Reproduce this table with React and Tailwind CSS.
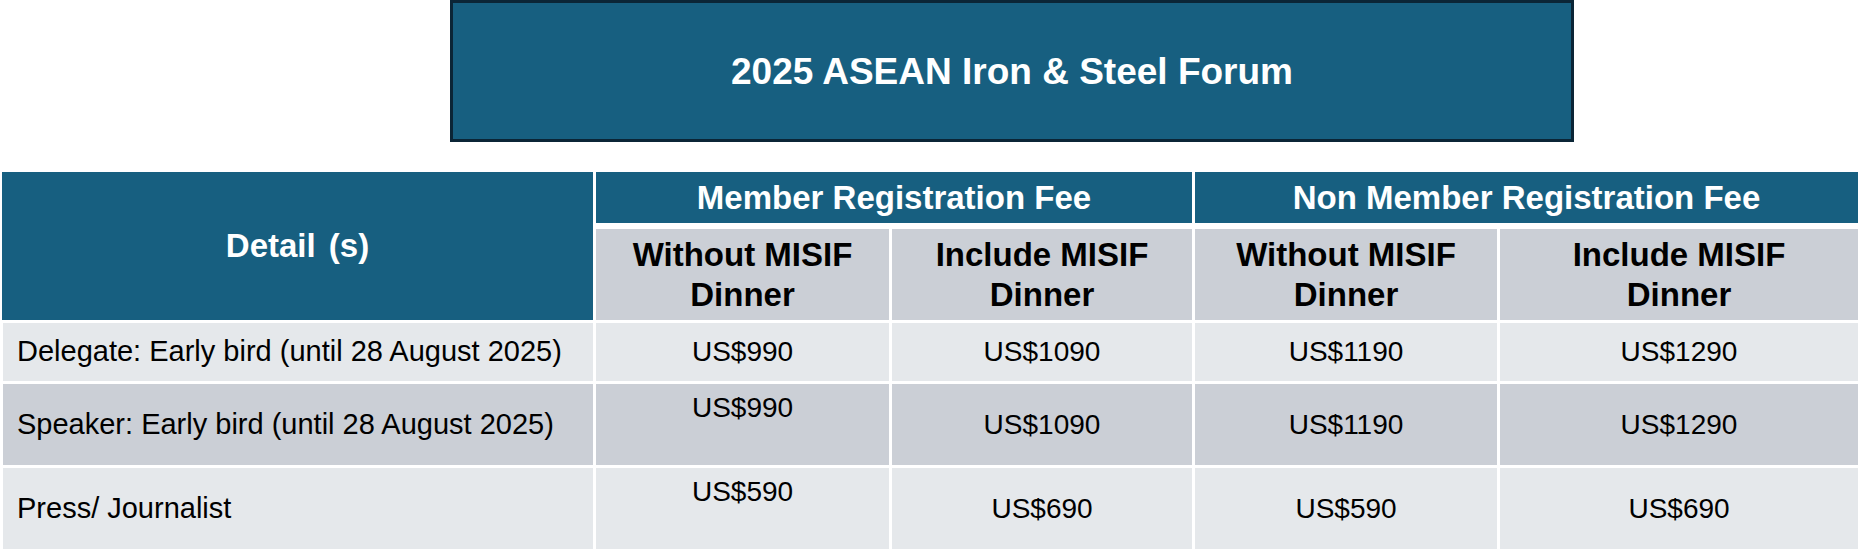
import React from 'react';

// Fee table rows: label, four prices, row shade, and whether the first price sits at the top
const rows = [
  {
    label: 'Delegate: Early bird (until 28 August 2025)',
    prices: ['US$990', 'US$1090', 'US$1190', 'US$1290'],
    shade: 'bg-[#e5e8eb]',
    firstTop: false,
  },
  {
    label: 'Speaker: Early bird (until 28 August 2025)',
    prices: ['US$990', 'US$1090', 'US$1190', 'US$1290'],
    shade: 'bg-[#cbcfd6]',
    firstTop: true,
  },
  {
    label: 'Press/ Journalist',
    prices: ['US$590', 'US$690', 'US$590', 'US$690'],
    shade: 'bg-[#e5e8eb]',
    firstTop: true,
  },
];

const SubHeader = ({ children }) => (
  <div className="mt-[3px] bg-[#cbcfd6] flex flex-col items-center justify-center text-[33px] font-bold leading-[40px] text-black">
    {children}
  </div>
);

const App = () => {
  return (
    <div className="w-[1864px] h-[554px] bg-white font-['Liberation_Sans',Arial,sans-serif] overflow-hidden">
      {/* Titre */}
      <div className="ml-[450px] w-[1124px] h-[142px] border-[3px] border-[#0b2536] bg-[#175f80] flex items-center justify-center">
        <h1 className="text-[37px] font-bold text-white leading-none">2025 ASEAN Iron &amp; Steel Forum</h1>
      </div>

      {/* Tableau des tarifs */}
      <div className="mt-[30px] ml-[2px] w-[1856px] grid grid-cols-[591px_293px_300px_302px_358px] grid-rows-[51px_94px_58px_81px_81px] gap-[3px] bg-white">
        <div className="row-span-2 bg-[#175f80] flex items-center justify-center text-[33px] font-bold text-white [word-spacing:4px]">
          Detail (s)
        </div>
        <div className="col-span-2 bg-[#175f80] flex items-center justify-center text-[33px] font-bold text-white">
          Member Registration Fee
        </div>
        <div className="col-span-2 bg-[#175f80] flex items-center justify-center text-[33px] font-bold text-white">
          Non Member Registration Fee
        </div>

        <SubHeader>
          <span>Without MISIF</span>
          <span>Dinner</span>
        </SubHeader>
        <SubHeader>
          <span>Include MISIF</span>
          <span>Dinner</span>
        </SubHeader>
        <SubHeader>
          <span>Without MISIF</span>
          <span>Dinner</span>
        </SubHeader>
        <SubHeader>
          <span>Include MISIF</span>
          <span>Dinner</span>
        </SubHeader>

        {rows.map((row) => (
          <React.Fragment key={row.label}>
            <div className={`${row.shade} ml-[1px] flex items-center pl-[14px] text-[29px] text-black`}>
              {row.label}
            </div>
            {row.prices.map((price, i) => (
              <div
                key={i}
                className={`${row.shade} flex justify-center text-[28px] leading-[1.2] text-black ${
                  i === 0 && row.firstTop ? 'items-start pt-[7px]' : 'items-center'
                }`}
              >
                {price}
              </div>
            ))}
          </React.Fragment>
        ))}
      </div>
    </div>
  );
};

export default App;
